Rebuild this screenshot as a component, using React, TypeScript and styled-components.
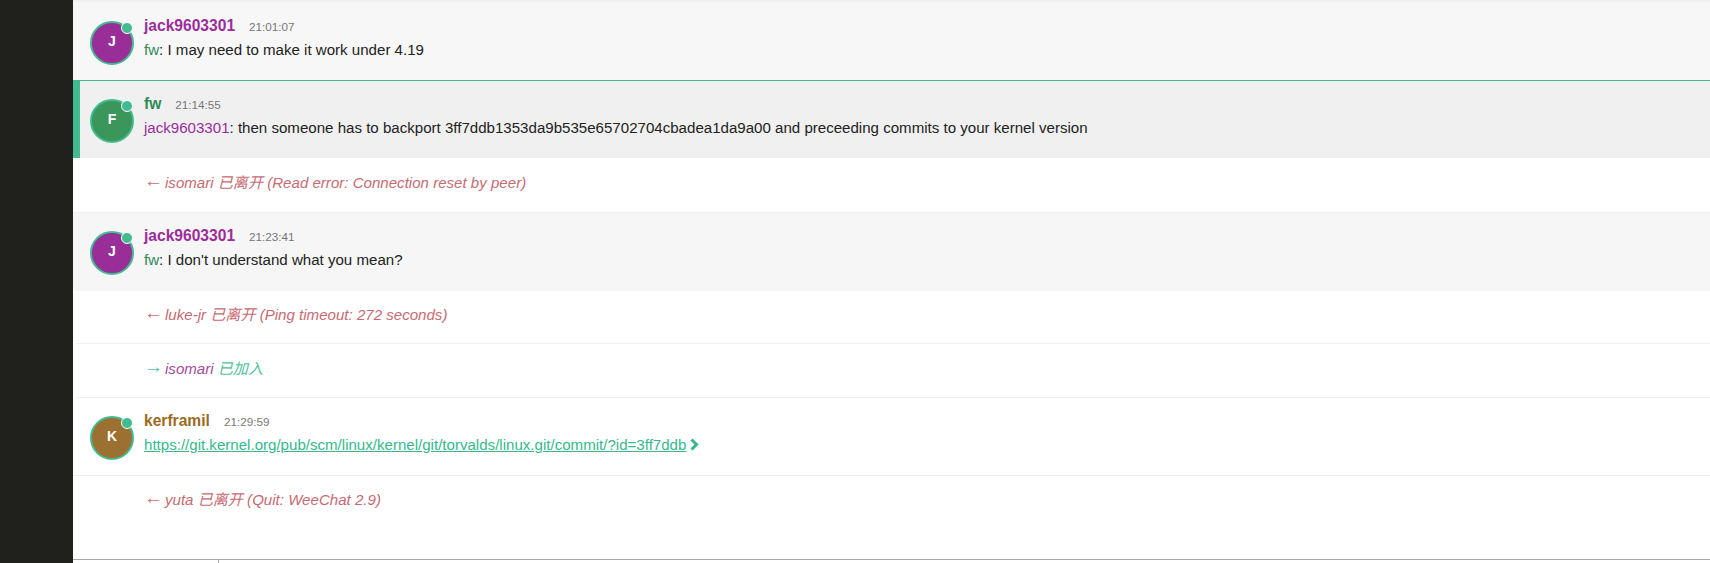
import React from "react";
import styled, { createGlobalStyle } from "styled-components";

const Global = createGlobalStyle`
  html, body { margin: 0; padding: 0; height: 100%; background: #fff; overflow: hidden; }
  #root { height: 100%; }
  body { font-family: "Liberation Sans", "Noto Sans CJK SC", sans-serif; font-size: 15.08px; color: #222; }
`;

const Shell = styled.div`
  display: flex;
  height: 563px;
`;
const Side = styled.aside`
  width: 73px;
  flex: none;
  background: #20211c;
`;
const Main = styled.main`
  flex: 1;
  min-width: 0;
  display: flex;
  flex-direction: column;
`;
const List = styled.div`
  flex: 1;
  padding-top: 2px;
  box-shadow: inset 0 2px 0 #f0f0f0;
`;
const Msg = styled.div<{ $hl?: boolean; $bg?: string; $h: number; $pad: number; $line?: boolean; $round?: boolean }>`
  display: flex;
  box-sizing: border-box;
  height: ${(p) => p.$h}px;
  background: ${(p) => p.$bg ?? "#fff"};
  padding: ${(p) => p.$pad}px 0 0 ${(p) => (p.$hl ? 10 : 17)}px;
  gap: 10px;
  border-top: ${(p) => (p.$hl ? "1px solid #3cb88d" : "none")};
  border-left: ${(p) => (p.$hl ? "7px solid #42bb91" : "none")};
  border-bottom: ${(p) => (p.$line ? "1px solid #f1f1f1" : "none")};
  border-bottom-left-radius: ${(p) => (p.$round ? "4px" : "0")};
`;
const Avatar = styled.div<{ $c: string }>`
  position: relative;
  width: 44px;
  height: 44px;
  margin-top: 2px;
  padding-bottom: 4px;
  flex: none;
  box-sizing: border-box;
  border-radius: 50%;
  border: 2px solid #42bb91;
  background: ${(p) => p.$c};
  color: #fff;
  font-weight: 700;
  font-size: 14px;
  display: flex;
  align-items: center;
  justify-content: center;
`;
const Dot = styled.span`
  position: absolute;
  top: -1px;
  right: -1px;
  width: 10px;
  height: 10px;
  border-radius: 50%;
  background: #42bb91;
  border: 1.5px solid #fff;
`;
const Body = styled.div`
  min-width: 0;
`;
const Head = styled.div`
  display: flex;
  align-items: baseline;
  gap: 14px;
  height: 20px;
  line-height: 20px;
  margin-top: -3px;
`;
const Name = styled.span<{ $c: string }>`
  color: ${(p) => p.$c};
  font-weight: 700;
  font-size: 15.6px;
`;
const Time = styled.span`
  color: #777;
  font-size: 11.7px;
`;
const Text = styled.div`
  margin-top: 4px;
  line-height: 20px;
  color: #222;
`;
const Nick = styled.span<{ $c: string }>`
  color: ${(p) => p.$c};
`;
const Link = styled.a`
  color: #35b98c;
  text-decoration: underline;
`;
const Chevron = styled.svg`
  width: 10px;
  height: 13px;
  margin-left: 3px;
  vertical-align: -1px;
`;
const Event = styled.div<{ $c: string; $h: number; $pad: number; $line?: boolean; $inset?: number }>`
  box-sizing: border-box;
  height: ${(p) => p.$h}px;
  padding: ${(p) => p.$pad}px 0 0 ${(p) => 71 - (p.$inset ?? 0)}px;
  margin-left: ${(p) => p.$inset ?? 0}px;
  display: flex;
  align-items: flex-start;
  line-height: 20px;
  font-style: italic;
  color: ${(p) => p.$c};
  white-space: pre;
  border-bottom: ${(p) => (p.$line ? "1px solid #f1f1f1" : "none")};
`;
const Arrow = styled.span`
  font-style: normal;
  font-size: 19px;
  line-height: 16px;
  margin-right: 2px;
`;
const EventNick = styled.span`
  color: #a54b9c;
`;
const Footer = styled.div`
  height: 3px;
  flex: none;
  border-top: 1px solid #aaa;
  display: flex;
`;
const Tab = styled.div`
  width: 145px;
  height: 3px;
  border-right: 1px solid #aaa;
`;

const J = "#9b2d9b";
const G = "#2f8a57";
const red = "#c96a72";
const green = "#4cc19b";

export default function App() {
  return (
    <Shell>
      <Global />
      <Side />
      <Main>
        <List>
          <Msg $bg="#f7f7f7" $h={78} $pad={17}>
            <Avatar $c="#9a2e99">J<Dot /></Avatar>
            <Body>
              <Head><Name $c={J}>jack9603301</Name><Time>21:01:07</Time></Head>
              <Text><Nick $c={G}>fw</Nick>: I may need to make it work under 4.19</Text>
            </Body>
          </Msg>
          <Msg $hl $bg="#f0f0f0" $h={78} $pad={16}>
            <Avatar $c="#3a965a">F<Dot /></Avatar>
            <Body>
              <Head><Name $c={G}>fw</Name><Time>21:14:55</Time></Head>
              <Text><Nick $c={J}>jack9603301</Nick>: then someone has to backport 3ff7ddb1353da9b535e65702704cbadea1da9a00 and preceeding commits to your kernel version</Text>
            </Body>
          </Msg>
          <Event $c={red} $h={55} $pad={15} $line><Arrow>←</Arrow>isomari 已离开 (Read error: Connection reset by peer)</Event>
          <Msg $bg="#f6f6f6" $h={78} $pad={16} $round>
            <Avatar $c="#9a2e99">J<Dot /></Avatar>
            <Body>
              <Head><Name $c={J}>jack9603301</Name><Time>21:23:41</Time></Head>
              <Text><Nick $c={G}>fw</Nick>: I don't understand what you mean?</Text>
            </Body>
          </Msg>
          <Event $c={red} $h={53} $pad={14} $line $inset={3}><Arrow>←</Arrow>luke-jr 已离开 (Ping timeout: 272 seconds)</Event>
          <Event $c={green} $h={54} $pad={15} $line $inset={3}><Arrow>→</Arrow><EventNick>isomari</EventNick> 已加入</Event>
          <Msg $h={78} $pad={16} $line>
            <Avatar $c="#9c7030">K<Dot /></Avatar>
            <Body>
              <Head><Name $c="#9c6b1e">kerframil</Name><Time>21:29:59</Time></Head>
              <Text>
                <Link>https://git.kernel.org/pub/scm/linux/kernel/git/torvalds/linux.git/commit/?id=3ff7ddb</Link>
                <Chevron viewBox="0 0 10 13"><path d="M2.5 1.5 L7.5 6.5 L2.5 11.5" fill="none" stroke="#35b98c" strokeWidth="3" /></Chevron>
              </Text>
            </Body>
          </Msg>
          <Event $c={red} $h={54} $pad={14}><Arrow>←</Arrow>yuta 已离开 (Quit: WeeChat 2.9)</Event>
        </List>
        <Footer><Tab /></Footer>
      </Main>
    </Shell>
  );
}
